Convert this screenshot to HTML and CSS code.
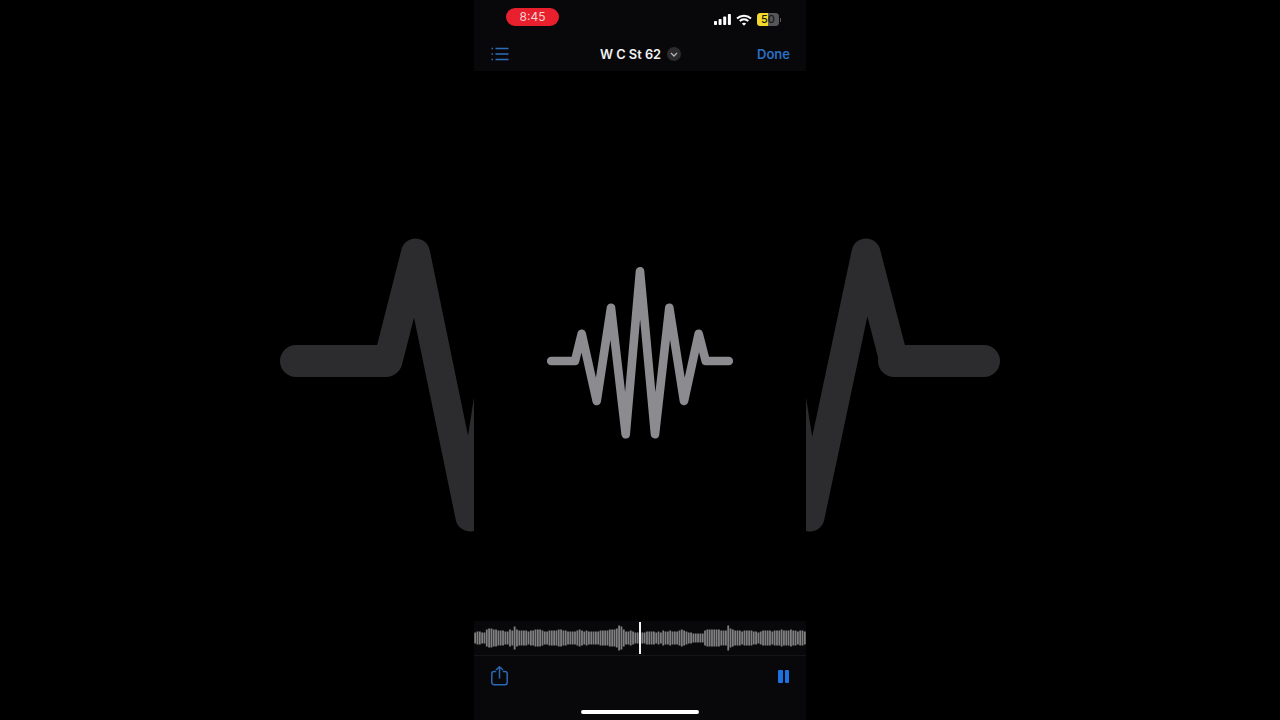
FILE: index.html
```html
<!DOCTYPE html>
<html lang="en">
<head>
    <meta charset="UTF-8">
    <meta name="viewport" content="width=device-width, initial-scale=1.0">
    <title>W C St 62</title>
    <link rel="stylesheet" href="styles.css">
</head>
<body>

    <!-- zoomed copy of the icon behind the phone -->
    <svg class="backdrop" viewBox="0 0 1280 720" fill="none" stroke="#2c2c2e" stroke-linecap="round" stroke-linejoin="round">
        <path d="M296 361H386M984 361H894" stroke-width="32"/>
        <path d="M388 361 415.5 253 470 517 527 152M894 361 866 253 810 517 753 152" stroke-width="29"/>
    </svg>

    <div id="phone">
        <div class="statusBar">
            <div class="recPill">8:45</div>
            <div class="statusIcons">
                <svg width="17" height="11" viewBox="0 0 17 11" fill="#fff">
                    <rect x="0" y="7" width="3" height="4" rx="0.8"/>
                    <rect x="4.6" y="5" width="3" height="6" rx="0.8"/>
                    <rect x="9.2" y="2.5" width="3" height="8.5" rx="0.8"/>
                    <rect x="13.9" y="0" width="3" height="11" rx="0.8"/>
                </svg>
                <svg width="16" height="12" viewBox="0 0 16 12" fill="none" stroke="#fff" stroke-width="2">
                    <path d="M1 4.4C5 .7 11 .7 15 4.4"/>
                    <path d="M3.7 7C6.2 4.8 9.8 4.8 12.3 7"/>
                    <path d="M8 11.8 5.9 9.5C7.1 8.5 8.9 8.5 10.1 9.5Z" fill="#fff" stroke="none"/>
                </svg>
                <div class="battery">
                    <div class="batteryLevel"></div>
                    <span class="batteryText">50</span>
                </div>
            </div>
        </div>

        <div class="navBar">
            <svg class="listIcon" width="18" height="14" viewBox="0 0 18 14" fill="none" stroke="#2f6cb8" stroke-width="1.3">
                <path d="M4.5 1.5H17.5M4.5 7H17.5M4.5 12.5H17.5"/>
                <path d="M.5 1.5H2M.5 7H2M.5 12.5H2" stroke-width="1.6"/>
            </svg>
            <div class="title">
                <span>W C St 62</span>
                <span class="chevron">
                    <svg width="8" height="5" viewBox="0 0 8 5" fill="none" stroke="#b5b5ba" stroke-width="1.3"><path d="M1 1 4 4 7 1"/></svg>
                </span>
            </div>
            <div class="done">Done</div>
        </div>

        <div class="stage">
            <svg class="pulseIcon" viewBox="0 0 186 192">
                <path d="M4.2 96H28L34.7 68.7 49.7 136 64 42.7 78.7 169.3 93 6.2 108 169.3 122.3 42.7 137 136 151.7 68.7 158.7 96H181.8" fill="none" stroke="#8b8b90" stroke-width="8.6" stroke-linecap="round" stroke-linejoin="round"/>
            </svg>
        </div>

        <div class="waveBand">
            <svg id="wave" width="332" height="34" viewBox="0 0 332 34"></svg>
            <div class="playhead"></div>
        </div>

        <div class="controls">
            <svg width="17" height="20" viewBox="0 0 17 20" fill="none" stroke="#2a68b4" stroke-width="1.5">
                <path d="M5.2 5.5H3A2.2 2.2 0 0 0 .8 7.7V16.5A2.2 2.2 0 0 0 3 18.7H14A2.2 2.2 0 0 0 16.2 16.5V7.7A2.2 2.2 0 0 0 14 5.5H11.8"/>
                <path d="M8.5 12.5V1M5 4 8.5 .8 12 4"/>
            </svg>
            <div class="pause"><i></i><i></i></div>
        </div>

        <div class="homeBar"><div class="homeIndicator"></div></div>
    </div>

    <script src="waveform.js"></script>
</body>
</html>
```

FILE: styles.css
```css
body {
    margin: 0;
    height: 720px;
    overflow: hidden;
    background-color: #000;
    display: flex;
    justify-content: center;
    font-family: Inter, "Liberation Sans", sans-serif;
}

.backdrop {
    position: absolute;
    left: 0;
    top: 0;
    width: 1280px;
    height: 720px;
}

#phone {
    position: relative;
    width: 332px;
    height: 720px;
    background-color: #000;
    display: flex;
    flex-direction: column;
}

.statusBar {
    height: 34px;
    padding: 8px 27px 0 32px;
    box-sizing: border-box;
    background-color: #08080b;
    display: flex;
    justify-content: space-between;
}

.recPill {
    width: 53px;
    height: 18px;
    border-radius: 9px;
    background-color: #e8202e;
    color: #f7d0d0;
    font-size: 12px;
    line-height: 18px;
    text-align: center;
}

.statusIcons {
    height: 23px;
    display: flex;
    align-items: center;
    gap: 5px;
}

.battery {
    position: relative;
    width: 22px;
    height: 13px;
    border-radius: 3.5px;
    background-color: #55555a;
    display: flex;
}

.battery::after {
    content: "";
    position: absolute;
    left: 22.5px;
    top: 4.5px;
    width: 1.5px;
    height: 4px;
    background-color: #55555a;
}

.batteryLevel {
    width: 11px;
    border-radius: 3.5px 0 0 3.5px;
    background-color: #f2d92c;
}

.batteryText {
    position: absolute;
    left: 0;
    right: 0;
    top: 0;
    text-align: center;
    font-size: 11px;
    line-height: 13px;
    font-weight: 500;
    color: #1a1a12;
}

.navBar {
    height: 37px;
    padding: 3px 16px 0 17px;
    box-sizing: border-box;
    background-color: #08080b;
    display: grid;
    grid-template-columns: 1fr auto 1fr;
    align-items: center;
}

.title {
    display: flex;
    align-items: center;
    gap: 6px;
    color: #f2f2f2;
    font-size: 12.8px;
    font-weight: 600;
}

.chevron {
    width: 14px;
    height: 14px;
    border-radius: 50%;
    background-color: #2c2c2e;
    display: flex;
    align-items: center;
    justify-content: center;
}

.done {
    justify-self: end;
    color: #2a6fc4;
    font-size: 13px;
    font-weight: 600;
}

.stage {
    flex: 1;
    padding-top: 29px;
    display: flex;
    align-items: center;
    justify-content: center;
}

.pulseIcon {
    width: 186px;
    height: 192px;
}

.waveBand {
    position: relative;
    height: 34px;
    background-color: #08080b;
    border-bottom: 1px solid #151518;
}

#wave {
    display: block;
}

.playhead {
    position: absolute;
    left: 165px;
    top: 1px;
    width: 2px;
    height: 32px;
    background-color: #f2f2f2;
}

.controls {
    height: 47px;
    padding: 0 17px 7px 17px;
    box-sizing: border-box;
    background-color: #08080b;
    display: flex;
    align-items: center;
    justify-content: space-between;
}

.pause {
    display: flex;
    gap: 2px;
}

.pause i {
    width: 4.5px;
    height: 13px;
    border-radius: 1px;
    background-color: #1a73e0;
}

.homeBar {
    height: 17px;
    background-color: #08080b;
    display: flex;
    justify-content: center;
}

.homeIndicator {
    width: 118px;
    height: 4px;
    margin-top: 7px;
    border-radius: 2px;
    background-color: #fff;
}
```

FILE: waveform.js
```js
// half heights of the recording bars, left to right
var bars = [
    5,6,6,5,5,8,9,9,8,8,7,7,7,6,6,8,7,11,8,7,7,7,7,6,7,7,8,8,8,7,6,6,7,7,7,7,
    8,8,7,7,6,6,6,6,7,8,7,6,7,6,6,6,6,6,7,7,7,7,8,8,8,9,12,11,8,6,6,7,6,5,5,5,
    5,5,6,6,6,6,5,6,5,7,6,6,7,6,6,6,7,8,7,6,5,5,4,4,4,4,4,7,8,8,8,8,8,8,7,7,
    7,12,9,8,7,7,7,6,7,7,7,7,6,6,5,6,7,7,7,7,6,7,7,7,8,7,7,7,8,7,7,6,7,7,6
];

var pitch = 332 / bars.length;
var d = '';
for (var i = 0; i < bars.length; i++) {
    var x = (i + 0.5) * pitch;
    d += 'M' + x.toFixed(2) + ' ' + (17 - bars[i] - 0.5) + 'V' + (17 + bars[i] + 0.5);
}

var path = document.createElementNS('http://www.w3.org/2000/svg', 'path');
path.setAttribute('d', d);
path.setAttribute('stroke', '#808082');
path.setAttribute('stroke-width', '1.8');
document.getElementById('wave').appendChild(path);
```
